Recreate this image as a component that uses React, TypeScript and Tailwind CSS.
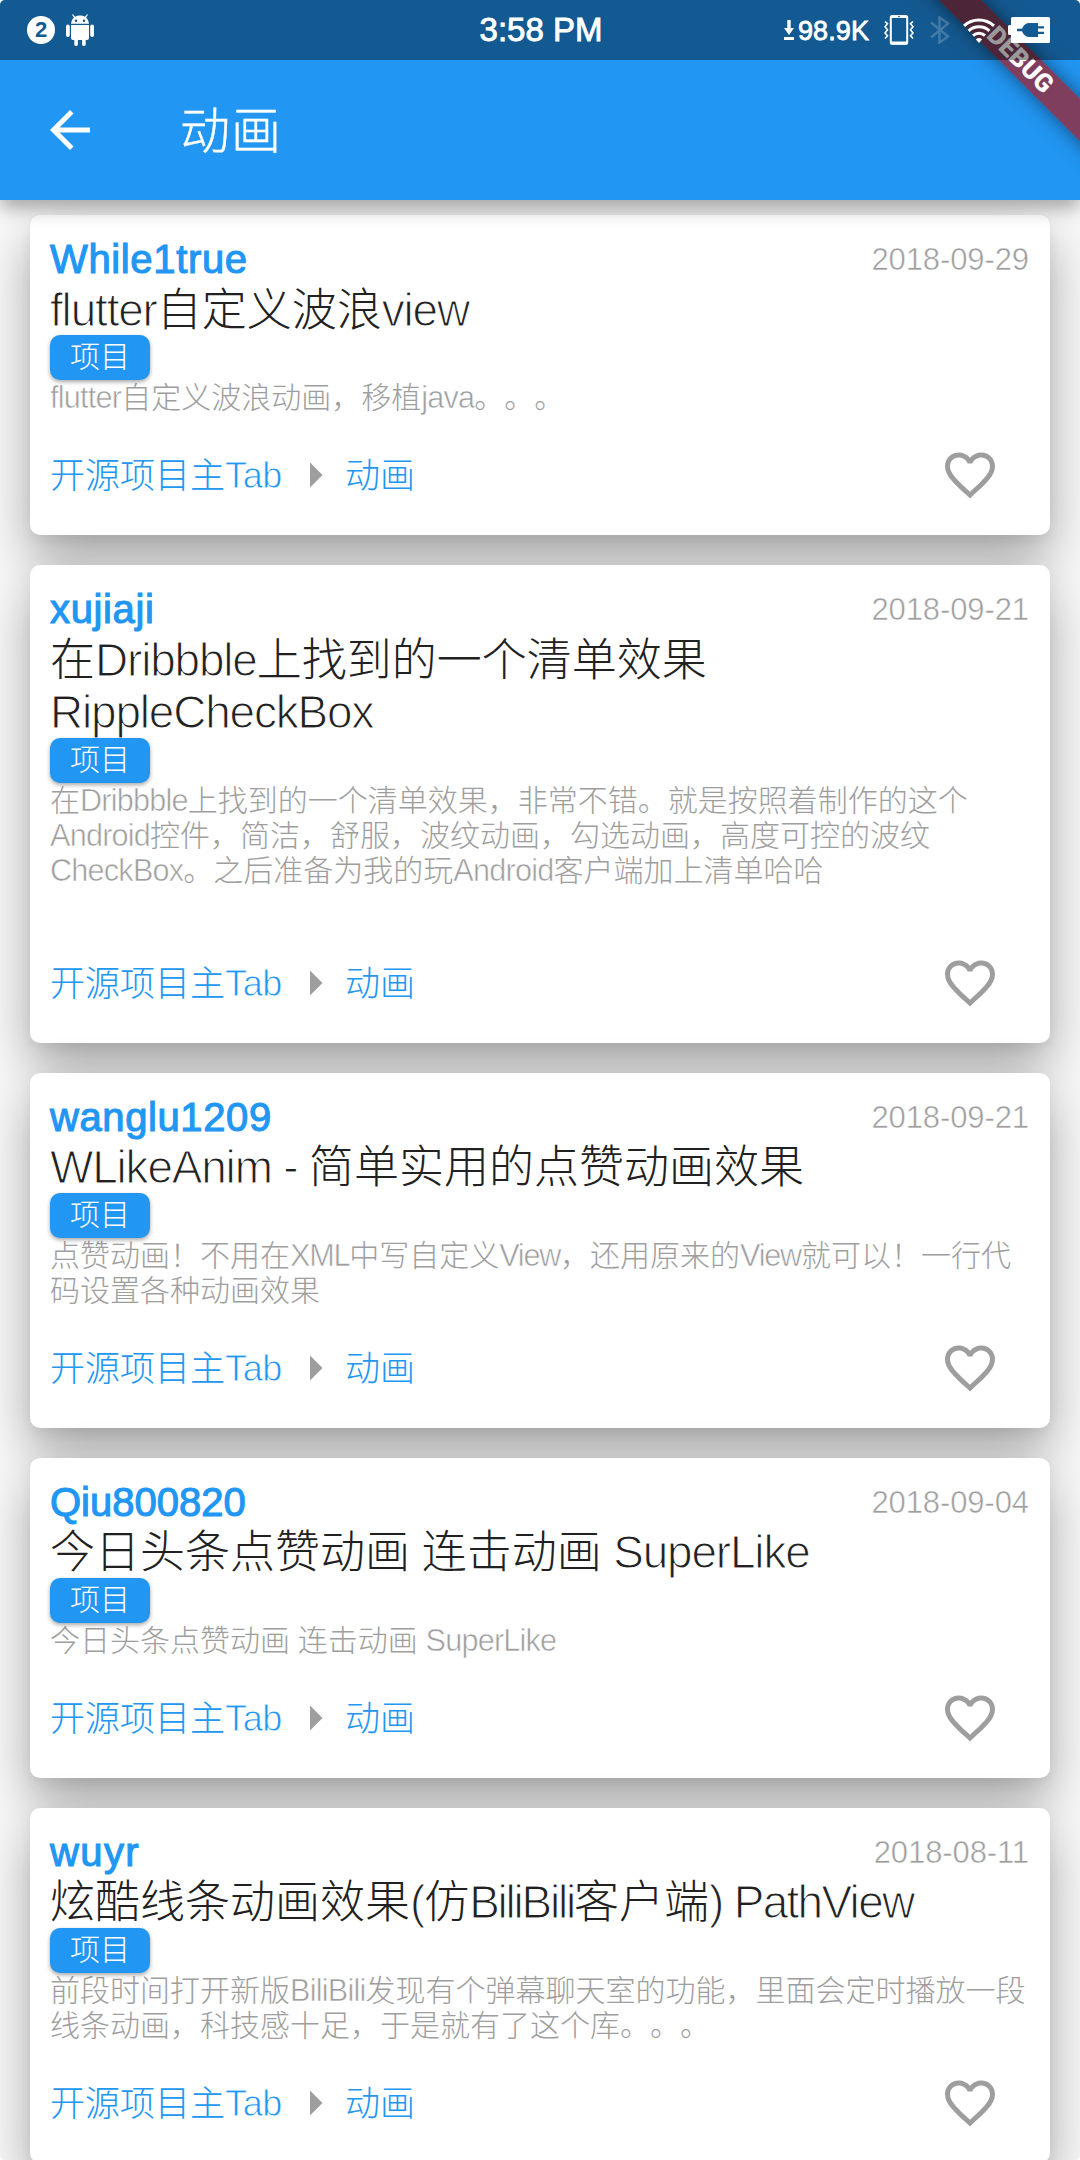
const FONT = 'font-["Liberation_Sans","Noto_Sans_CJK_SC",sans-serif]';

type Project = {
  author: string;
  authorTracking: string;
  date: string;
  title: string[];
  desc: string[];
};

const projects: Project[] = [
  {
    author: 'While1true',
    authorTracking: 'tracking-[0.65px]',
    date: '2018-09-29',
    title: ['flutter自定义波浪view'],
    desc: ['flutter自定义波浪动画，移植java。。。'],
  },
  {
    author: 'xujiaji',
    authorTracking: 'tracking-[0.65px]',
    date: '2018-09-21',
    title: ['在Dribbble上找到的一个清单效果', 'RippleCheckBox'],
    desc: [
      '在Dribbble上找到的一个清单效果，非常不错。就是按照着制作的这个',
      'Android控件，简洁，舒服，波纹动画，勾选动画，高度可控的波纹',
      'CheckBox。之后准备为我的玩Android客户端加上清单哈哈',
      '',
    ],
  },
  {
    author: 'wanglu1209',
    authorTracking: 'tracking-[0.6px]',
    date: '2018-09-21',
    title: ['WLikeAnim - 简单实用的点赞动画效果'],
    desc: ['点赞动画！不用在XML中写自定义View，还用原来的View就可以！一行代', '码设置各种动画效果'],
  },
  {
    author: 'Qiu800820',
    authorTracking: 'tracking-normal',
    date: '2018-09-04',
    title: ['今日头条点赞动画 连击动画 SuperLike'],
    desc: ['今日头条点赞动画 连击动画 SuperLike'],
  },
  {
    author: 'wuyr',
    authorTracking: 'tracking-[1.4px]',
    date: '2018-08-11',
    title: ['炫酷线条动画效果(仿BiliBili客户端) PathView'],
    desc: ['前段时间打开新版BiliBili发现有个弹幕聊天室的功能，里面会定时播放一段', '线条动画，科技感十足，于是就有了这个库。。。'],
  },
];

/* Splits mixed text so that each Latin run gets its own size, weight and tracking. */
function Mixed({ text, latin }: { text: string; latin: (run: string) => string }) {
  return (
    <>
      {text.split(/([\x20-\x7e]+)/).map((part, i) =>
        i % 2 === 1 ? (
          <span key={i} className={latin(part)}>
            {part}
          </span>
        ) : (
          part
        ),
      )}
    </>
  );
}

/* Latin runs are thinned with a stroke in the card's white. */
function titleRun(run: string) {
  if (run.includes('Bili')) return 'text-[1.02em] tracking-[-0.048em] [-webkit-text-stroke:0.024em_white]';
  if (run.includes('PathView')) return 'text-[1.02em] tracking-[-0.036em] [-webkit-text-stroke:0.024em_white]';
  return 'text-[1.02em] tracking-[-0.025em] [-webkit-text-stroke:0.024em_white]';
}

function descRun(run: string) {
  if (run === 'XML' || run === 'View') return 'text-[1.02em] tracking-[-0.04em] [-webkit-text-stroke:0.018em_white]';
  return 'text-[1.02em] tracking-[-0.025em] [-webkit-text-stroke:0.018em_white]';
}

function tabRun() {
  return 'text-[1.03em] tracking-[-0.01em] [-webkit-text-stroke:0.022em_white]';
}

function Card({ p }: { p: Project }) {
  return (
    <article className="shrink-0 rounded-[10px] bg-white px-5 pt-5 shadow-[0_24px_54px_rgba(0,0,0,0.35),0_6px_12px_rgba(0,0,0,0.05)]">
      <div className="flex h-[47.5px] items-start justify-between">
        <span
          className={`${p.authorTracking} text-[40px] leading-[48px] text-[#2196f3] [-webkit-text-stroke:1.1px_#2196f3]`}
        >
          {p.author}
        </span>
        <span className="mr-[1px] text-[31px] leading-[49px] tracking-[-0.1px] text-[#9e9e9e] [-webkit-text-stroke:0.5px_white]">
          {p.date}
        </span>
      </div>
      <h2 className="text-[45px] leading-[54px] font-light text-[#212121]">
        {p.title.map((line) => (
          <div key={line} className="h-[52.5px] whitespace-nowrap">
            <Mixed text={line} latin={titleRun} />
          </div>
        ))}
      </h2>
      <div className="relative h-[45px] w-[100px] rounded-[10px] bg-[#2196f3] text-center text-[30px] leading-[43px] font-light text-white shadow-[0_2px_4px_rgba(0,0,0,0.35)]">
        项目
      </div>
      <div className="text-[30px] leading-[35px] font-light text-[#9e9e9e]">
        {p.desc.map((line, i) => (
          <div key={i} className="h-[35px] whitespace-nowrap">
            <Mixed text={line} latin={descRun} />
          </div>
        ))}
      </div>
      <div className="flex h-[120px] items-center text-[35px] font-light text-[#2196f3]">
        <span className="w-[235px] pt-[3px] whitespace-nowrap">
          <Mixed text="开源项目主Tab" latin={tabRun} />
        </span>
        <svg viewBox="0 0 24 24" className="size-[60px] fill-[#9e9e9e]">
          <path d="M10 17l5-5-5-5v10z" />
        </svg>
        <span className="pt-[3px]">动画</span>
        <div className="ml-auto flex size-[120px] items-center justify-center">
          <svg viewBox="0 0 24 24" className="size-[60px] fill-[#9e9e9e]">
            <path d="M16.5 3c-1.74 0-3.41.81-4.5 2.09C10.91 3.81 9.24 3 7.5 3 4.42 3 2 5.42 2 8.5c0 3.78 3.4 6.86 8.55 11.54L12 21.35l1.45-1.32C18.6 15.36 22 12.28 22 8.5 22 5.42 19.58 3 16.5 3zm-4.4 15.55l-.1.1-.1-.1C7.14 14.24 4 11.39 4 8.5 4 6.5 5.5 5 7.5 5c1.54 0 3.04.99 3.57 2.36h1.87C13.46 5.99 14.96 5 16.5 5c2 0 3.5 1.5 3.5 3.5 0 2.89-3.14 5.74-7.9 10.05z" />
          </svg>
        </div>
      </div>
    </article>
  );
}

function StatusBar() {
  return (
    <div className="absolute inset-x-0 top-0 z-10 flex h-[60px] items-center bg-black/40 text-white">
      <div className="ml-[27px] flex size-7 items-center justify-center rounded-full bg-white text-[22px] leading-none font-bold text-[#145a92]">
        2
      </div>
      <svg viewBox="0 0 28 32" className="ml-[11px] h-8 w-7 fill-white">
        <path
          d="M6 .8L7 .2l2 2.600A10 10 0 0 1 14 1.600a10 10 0 0 1 4.900 1.200L21 .2l1 .6-1.900 2.800A8.500 8.500 0 0 1 23 9.700H5A8.500 8.500 0 0 1 7.900 3.600zM10 5.600a1.200 1.200 0 1 0 .01 2.400 1.200 1.200 0 0 0-.01-2.400zm8 0a1.200 1.200 0 1 0 .01 2.400 1.200 1.200 0 0 0-.01-2.400z"
          fillRule="evenodd"
        />
        <path d="M5 11h18v13a2 2 0 0 1-2 2h-1.300v4.300a1.800 1.800 0 0 1-3.600 0V26h-4.200v4.300a1.800 1.800 0 0 1-3.600 0V26H7a2 2 0 0 1-2-2z" />
        <rect x="0" y="10.500" width="3.800" height="12.500" rx="1.900" />
        <rect x="24.200" y="10.500" width="3.800" height="12.500" rx="1.900" />
      </svg>
      <div className="absolute inset-x-0 pl-[2px] text-center text-[33px] leading-[62px] [-webkit-text-stroke:0.9px_white]">
        3:58 PM
      </div>
      <div className="mr-[30px] ml-auto flex items-center">
        <svg viewBox="0 0 10 20" className="h-5 w-[10px] fill-white">
          <path d="M3.300 0h3.400v8H10l-5 7-5-7h3.300zM0 17h10v3H0z" />
        </svg>
        <span className="ml-[4px] w-[70px] text-[27px] leading-[60px] tracking-[0.1px] [-webkit-text-stroke:0.8px_white]">
          <span className="block pt-[1px]">98.9K</span>
        </span>
        <svg viewBox="0 0 30 30" className="ml-[16px] size-[30px] fill-none stroke-white">
          <rect x="6.800" y="1.300" width="16.400" height="27.400" rx="1" strokeWidth="2" />
          <path d="M7 1.700h16M7 28h16" strokeWidth="2.800" />
          <path d="M14 1.700h2" stroke="#145a92" strokeWidth="1" />
          <path
            d="M1 6.500l2.500 2.200L1 11.800l2.500 3L1 18l2.500 2.800L1 23.500M29 6.500l-2.500 2.200 2.500 3.100-2.500 3L29 18l-2.500 2.800 2.500 2.700"
            strokeWidth="1.600"
          />
        </svg>
        <svg viewBox="0 0 20 28" className="ml-[16px] h-7 w-5 fill-none stroke-white/20">
          <path d="M1 6.500l17 14-8.500 6V1.500l8.500 6-17 14" strokeWidth="2.400" />
        </svg>
        <svg viewBox="0 0 32 25" className="ml-[13px] h-[25px] w-8 fill-none stroke-white">
          <path d="M1 7.800a22 22 0 0 1 30 0" strokeWidth="3" />
          <path d="M5.600 12.800a15.500 15.500 0 0 1 20.800 0" strokeWidth="3" />
          <path d="M10 17.600a9 9 0 0 1 12 0" strokeWidth="3" />
          <path d="M12.900 21.400a4.500 4.500 0 0 1 6.200 0L16 25z" className="fill-white stroke-none" />
        </svg>
        <svg viewBox="0 0 42 26" className="ml-[13px] h-[26px] w-[42px] fill-white">
          <path d="M4.500 0h36A1.500 1.500 0 0 1 42 1.500v23a1.500 1.500 0 0 1-1.500 1.500h-36A1.500 1.500 0 0 1 3 24.500V18H1.500A1.500 1.500 0 0 1 0 16.500v-7A1.500 1.500 0 0 1 1.500 8H3V1.500A1.500 1.500 0 0 1 4.500 0z" />
          <path
            d="M9 11.800h5c1.500-3.800 4-5.800 7.500-5.800H30v3.200h6v2.300h-6v3.300h6v2.300h-6V20h-8.500c-3.500 0-6-2-7.500-5.800H9z"
            fill="#145a92"
          />
        </svg>
      </div>
    </div>
  );
}

export default function App() {
  return (
    <div
      className={`${FONT} relative flex h-[2160px] w-[1080px] flex-col overflow-hidden rounded-[5px] bg-[#fafafa] [text-spacing-trim:space-all]`}
      lang="zh-CN"
    >
      <StatusBar />
      <header className="relative z-[5] h-[200px] shrink-0 bg-[#2196f3] pt-[60px] shadow-[0_8px_18px_rgba(0,0,0,0.34)]">
        <div className="flex h-[140px] items-center pl-10">
          <svg viewBox="0 0 24 24" className="size-[60px] fill-white">
            <path d="M20 11H7.830l5.590-5.590L12 4l-8 8 8 8 1.410-1.410L7.830 13H20v-2z" />
          </svg>
          <h1 className="mt-1 ml-20 text-[50px] leading-[60px] font-light tracking-[1px] text-white [-webkit-text-stroke:0.4px_white]">
            动画
          </h1>
        </div>
        <div className="absolute top-0 right-0 size-[200px] overflow-hidden">
          <div className="absolute top-[45px] left-[-10px] flex h-[30px] w-[300px] rotate-45 items-center justify-center bg-[linear-gradient(#8a3048a8,#8a3048a8),linear-gradient(#b71c1c80,#b71c1c80)] font-['Roboto'] text-[25.5px] leading-none font-black text-white shadow-[0_0_20px_rgba(0,0,0,0.5)]">
            DEBUG
          </div>
        </div>
      </header>
      <main className="flex flex-col gap-[30px] px-[30px] pt-[15px]">
        {projects.map((p) => (
          <Card key={p.author} p={p} />
        ))}
      </main>
    </div>
  );
}
